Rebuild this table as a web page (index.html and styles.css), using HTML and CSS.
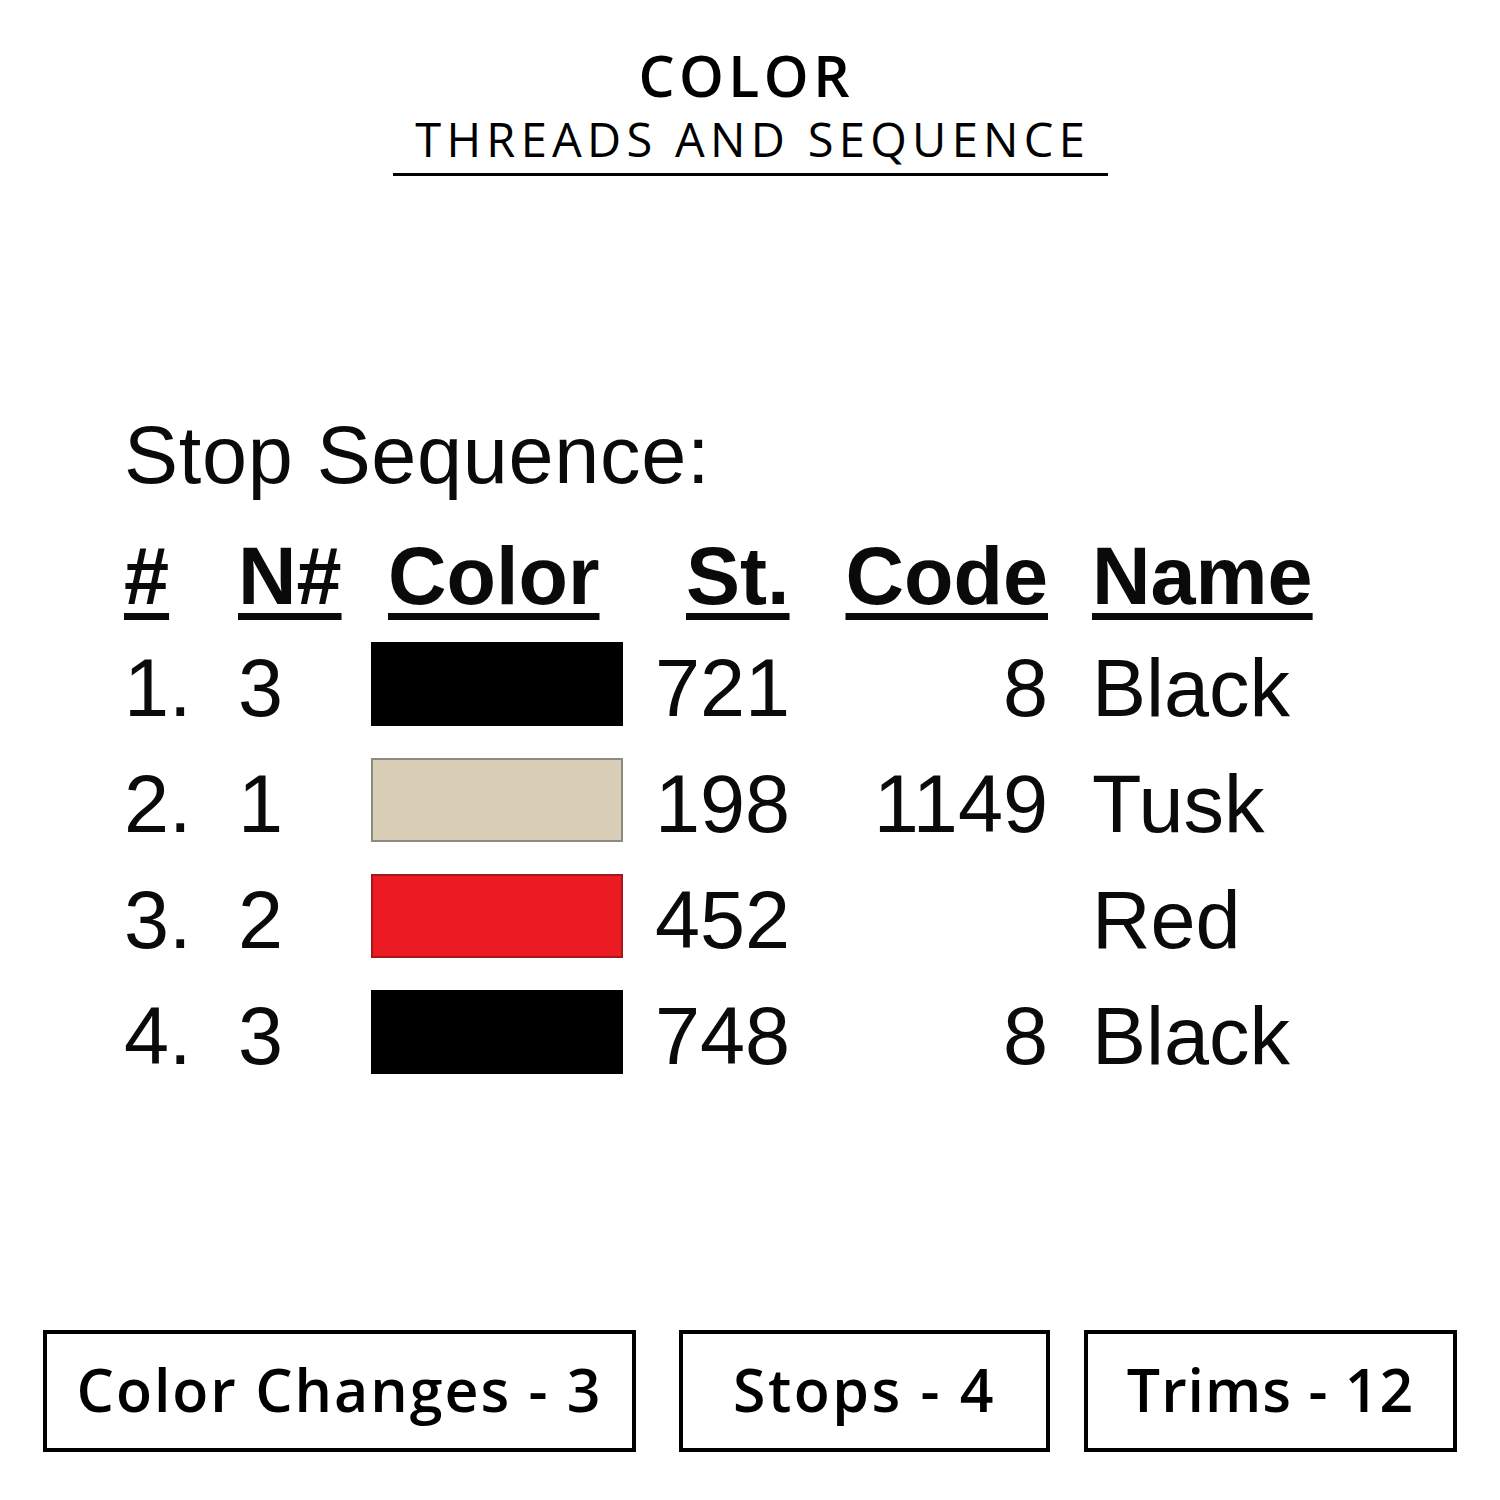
FILE: index.html
```html
<!DOCTYPE html>
<html lang="en">
<head>
<meta charset="utf-8">
<title>Color Threads and Sequence</title>
<link rel="stylesheet" href="styles.css">
</head>
<body>
<div class="page">
  <header class="heading">
    <div class="title">COLOR</div>
    <div class="subtitle">THREADS AND SEQUENCE</div>
    <div class="rule"></div>
  </header>

  <section class="sequence">
    <div class="seq-title">Stop Sequence:</div>
    <div class="seq-grid">
      <div class="cell head"><span class="u">#</span></div>
      <div class="cell head"><span class="u">N#</span></div>
      <div class="cell head color-h"><span class="u">Color</span></div>
      <div class="cell head st-h"><span class="u">St.</span></div>
      <div class="cell head code"><span class="u">Code</span></div>
      <div class="cell head name"><span class="u">Name</span></div>

      <div class="cell row">1.</div>
      <div class="cell row">3</div>
      <div class="cell row"><div class="swatch black"></div></div>
      <div class="cell row">721</div>
      <div class="cell row code">8</div>
      <div class="cell row name">Black</div>

      <div class="cell row">2.</div>
      <div class="cell row">1</div>
      <div class="cell row"><div class="swatch tusk"></div></div>
      <div class="cell row">198</div>
      <div class="cell row code">1149</div>
      <div class="cell row name">Tusk</div>

      <div class="cell row">3.</div>
      <div class="cell row">2</div>
      <div class="cell row"><div class="swatch red"></div></div>
      <div class="cell row">452</div>
      <div class="cell row code"></div>
      <div class="cell row name">Red</div>

      <div class="cell row">4.</div>
      <div class="cell row">3</div>
      <div class="cell row"><div class="swatch black"></div></div>
      <div class="cell row">748</div>
      <div class="cell row code">8</div>
      <div class="cell row name">Black</div>
    </div>
  </section>

  <section class="stats">
    <div class="stat stat-wide">Color Changes - 3</div>
    <div class="stat stat-mid">Stops - 4</div>
    <div class="stat stat-end">Trims - 12</div>
  </section>
</div>
</body>
</html>
```

FILE: styles.css
```css
* { box-sizing: border-box; }

html, body {
  margin: 0;
  padding: 0;
  background: #ffffff;
  color: #000000;
}

.page {
  width: 1500px;
  height: 1500px;
  display: flex;
  flex-direction: column;
}

.heading {
  padding-top: 45px;
  display: flex;
  flex-direction: column;
  align-items: center;
  font-family: "Open Sans", "Liberation Sans", sans-serif;
}

.title {
  font-size: 57px;
  line-height: 60px;
  font-weight: 600;
  letter-spacing: 4.5px;
  padding-left: 4.5px;
  margin-left: -12px;
}

.subtitle {
  margin-top: 6px;
  font-size: 47px;
  line-height: 56px;
  font-weight: 400;
  letter-spacing: 5.3px;
  padding-left: 5.3px;
}

.rule {
  margin-top: 6px;
  width: 715px;
  height: 3px;
  background: #000;
}

.sequence {
  margin-top: 229px;
  padding-left: 124px;
  font-family: "Liberation Sans", Arial, sans-serif;
  font-size: 81px;
  color: #0a0a0a;
}

.seq-title {
  line-height: 100px;
  height: 100px;
  margin-bottom: 17px;
  letter-spacing: 0.7px;
}

.seq-grid {
  display: grid;
  grid-template-columns: 114px 133px 284px 188px 205px auto;
  grid-template-rows: 108px repeat(4, 116px);
}

.cell {
  display: flex;
  align-items: center;
  white-space: nowrap;
}

.head {
  font-weight: bold;
}

.u {
  text-decoration: underline;
  text-decoration-thickness: 7px;
  text-underline-offset: 9px;
}

.color-h { padding-left: 17px; }
.st-h { padding-left: 31px; }

.code { justify-content: flex-end; }
.name { padding-left: 44px; }

.swatch {
  width: 252px;
  height: 84px;
  margin-bottom: 8px;
}

.swatch.black { background: #000; }
.swatch.tusk {
  background: #d9ceb7;
  border: 2px solid #8d8a80;
}
.swatch.red {
  background: #ec1b23;
  border: 2px solid #a8161b;
}

.stats {
  margin-top: 236px;
  padding-left: 43px;
  display: flex;
  font-family: "Open Sans", "Liberation Sans", sans-serif;
  font-weight: 600;
  font-size: 59px;
}

.stat {
  height: 122px;
  border: 4px solid #000;
  display: flex;
  align-items: center;
  justify-content: center;
  letter-spacing: 1.5px;
  padding-bottom: 4px;
}

.stat-wide { width: 593px; letter-spacing: 2px; }
.stat-mid { width: 371px; margin-left: 43px; letter-spacing: 2.5px; }
.stat-end { width: 373px; margin-left: 34px; letter-spacing: 1px; }
```
